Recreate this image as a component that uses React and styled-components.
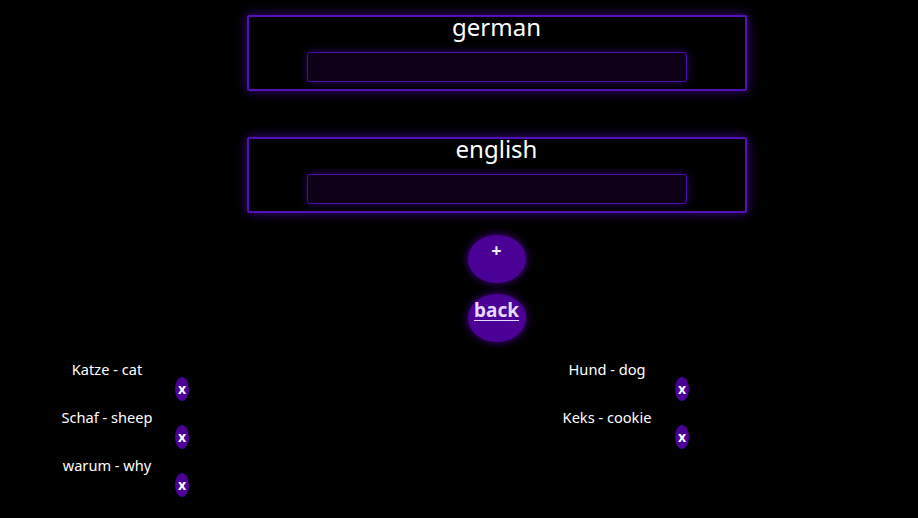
import React from "react";
import styled, { createGlobalStyle } from "styled-components";

const words = [
  { de: "Katze", en: "cat" },
  { de: "Hund", en: "dog" },
  { de: "Schaf", en: "sheep" },
  { de: "Keks", en: "cookie" },
  { de: "warum", en: "why" },
];

const App = () => {
  return (
    <>
      <GlobalStyle />
      <Page>
        <Form>
          <Field>
            <Label>german</Label>
            <Input type="text" />
          </Field>
          <Field>
            <Label>english</Label>
            <Input type="text" />
          </Field>
          <Actions>
            <RoundButton>+</RoundButton>
            <RoundButton $link>back</RoundButton>
          </Actions>
        </Form>
        <WordList>
          {words.map(word => (
            <WordItem key={word.de}>
              <WordText>
                {word.de} - {word.en}
              </WordText>
              <RemoveRow>
                <RemoveButton>x</RemoveButton>
              </RemoveRow>
            </WordItem>
          ))}
        </WordList>
      </Page>
    </>
  );
};

const GlobalStyle = createGlobalStyle`
  html, body {
    margin: 0;
    background: #000;
  }

  body {
    font-family: "Noto Sans", "Open Sans", sans-serif;
    color: #fff;
  }
`;

const Page = styled.div`
  width: 918px;
  min-height: 518px;
  padding-top: 15px;
  box-sizing: border-box;
  display: flex;
  flex-direction: column;
`;

const Form = styled.div`
  display: flex;
  flex-direction: column;
  align-items: center;
  padding-left: 75px;
`;

const Field = styled.div`
  width: 500px;
  height: 76px;
  box-sizing: border-box;
  border: 2px solid #5310b8;
  border-radius: 2px;
  box-shadow: 0 0 12px #3b0487;
  display: flex;
  flex-direction: column;
  align-items: center;
  margin-bottom: 46px;

  &:nth-of-type(2) {
    margin-bottom: 22px;
  }
`;

const Label = styled.div`
  font-size: 24px;
  line-height: 24px;
  height: 34px;
  margin-top: -2px;
  box-sizing: border-box;
`;

const Input = styled.input`
  width: 380px;
  height: 30px;
  margin-top: 3px;
  box-sizing: border-box;
  background: #0d0017;
  border: 1px solid #4a0ea8;
  border-radius: 3px;
  box-shadow: 0 0 8px #2c0466;
  outline: none;
  color: #fff;
`;

const Actions = styled.div`
  display: flex;
  flex-direction: column;
  align-items: center;
  gap: 11px;
  margin-left: 0;
`;

const RoundButton = styled.button`
  width: 58px;
  height: 48px;
  border: none;
  border-radius: 50%;
  background: #4b0096;
  box-shadow: 0 0 8px #4b0096;
  color: ${({ $link }) => ($link ? "#e4d9ff" : "#eee")};
  font-family: "Noto Sans", "Open Sans", sans-serif;
  font-weight: bold;
  font-size: ${({ $link }) => ($link ? "19px" : "18px")};
  line-height: 20px;
  padding: ${({ $link }) => ($link ? "6px 0 0" : "5px 0 0")};
  text-decoration: ${({ $link }) => ($link ? "underline" : "none")};
  text-underline-offset: 3px;
  display: flex;
  justify-content: center;
  align-items: flex-start;
`;

const WordList = styled.div`
  display: grid;
  grid-template-columns: 500px 214px;
  row-gap: 6px;
  margin-top: 17px;
`;

const WordItem = styled.div`
  width: 214px;
  display: flex;
  flex-direction: column;
`;

const WordText = styled.div`
  font-size: 14.6px;
  line-height: 18px;
  height: 18px;
  padding-top: 1px;
  box-sizing: border-box;
  text-align: center;
`;

const RemoveRow = styled.div`
  display: flex;
  justify-content: flex-end;
  padding-right: 25px;
`;

const RemoveButton = styled.button`
  width: 14px;
  height: 24px;
  padding: 0;
  border: none;
  border-radius: 50%;
  background: #4b0096;
  color: #fff;
  font-family: "Noto Sans", sans-serif;
  font-weight: bold;
  font-size: 14px;
  line-height: 24px;
  display: flex;
  align-items: center;
  justify-content: center;
`;

export default App;
